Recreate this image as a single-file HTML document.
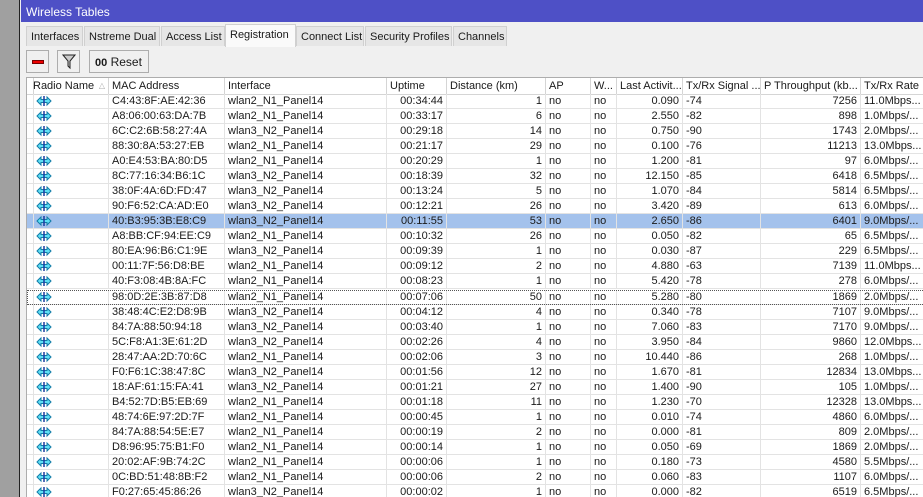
<!DOCTYPE html>
<html><head><meta charset="utf-8"><style>
*{margin:0;padding:0;box-sizing:border-box}
html,body{width:923px;height:497px;overflow:hidden}
body{background:#f0f0f0;font-family:"Liberation Sans",Arial,sans-serif;font-size:11px;color:#1a1a1a;position:relative}
#lstrip{position:absolute;left:0;top:0;width:20px;height:497px;background:#a0a0a0;border-right:1px solid #222}
#title{position:absolute;left:21px;top:0;right:0;height:22px;background:#4e50c6;color:#fff;font-size:12px;padding:5px 0 0 5px}
.tab{position:absolute;top:26px;height:20px;border:1px solid #d0d0d0;border-bottom:none;background:#e6e6e6;padding:4px 0 0 4px;font-size:11px;white-space:nowrap;overflow:hidden}
.tab.act{top:24px;height:23px;background:#fafafa;padding-top:4px}
.btn{position:absolute;top:50px;height:23px;border:1px solid #adadad;background:#f0f0f0}
#tbl{position:absolute;left:26px;top:77px;width:897px;height:420px;background:#fff;border-left:1px solid #adadad;border-top:1px solid #adadad;overflow:hidden}
.row{position:absolute;left:0;width:920px;height:15px;display:grid;grid-template-columns:3px 79px 116px 162px 60px 99px 45px 26px 66px 78px 100px 70px;border-bottom:1px solid #e3e3e3}
.row>span{border-right:1px solid #e3e3e3;white-space:nowrap;overflow:hidden;padding:0 3px;line-height:14px}
.row>span.r{text-align:right}
.hdr{top:0;height:17px;background:#fff;border-bottom:1px solid #d5d5d5}
.hdr>span{border-right:1px solid #d5d5d5;padding-top:1px}
.sel{background:#a4c2ec}
.foc{outline:1px dotted #555;outline-offset:-1px}
svg{display:block;margin:1px 0 0 3px}
</style></head><body>
<div id="lstrip"></div>
<div id="title">Wireless Tables</div>
<div class="tab" style="left:26px;width:57px">Interfaces</div>
<div class="tab" style="left:84px;width:76px">Nstreme Dual</div>
<div class="tab" style="left:161px;width:64px">Access List</div>
<div class="tab act" style="left:225px;width:71px">Registration</div>
<div class="tab" style="left:296px;width:68px">Connect List</div>
<div class="tab" style="left:365px;width:87px">Security Profiles</div>
<div class="tab" style="left:453px;width:54px">Channels</div>
<div class="btn" style="left:26px;width:23px"><div style="position:absolute;left:5px;top:9px;width:12px;height:4px;background:#e00;border:1px solid #700"></div></div>
<div class="btn" style="left:57px;width:23px"><svg width="14" height="16" viewBox="0 0 14 16" style="margin:3px 0 0 4px"><path d="M1 1h12L8 7v7L6 12V7z" fill="#ccc" stroke="#222"/></svg></div>
<div class="btn" style="left:89px;width:60px;padding:4px 0 0 5px;font-size:12px"><b style="font-size:11px">00</b> Reset</div>
<div id="tbl">
<div class="row hdr"><span></span><span>Radio Name <span style="color:#aaa;font-size:8px;float:right">△</span></span><span>MAC Address</span><span>Interface</span><span>Uptime</span><span>Distance (km)</span><span>AP</span><span>W...</span><span>Last Activit...</span><span>Tx/Rx Signal ...</span><span>P Throughput (kb...</span><span>Tx/Rx Rate</span></div>
<div id="rows"></div>
</div>
<script>
var d=[
["C4:43:8F:AE:42:36","wlan2_N1_Panel14","00:34:44","1","0.090","-74","7256","11.0Mbps..."],
["A8:06:00:63:DA:7B","wlan2_N1_Panel14","00:33:17","6","2.550","-82","898","1.0Mbps/..."],
["6C:C2:6B:58:27:4A","wlan3_N2_Panel14","00:29:18","14","0.750","-90","1743","2.0Mbps/..."],
["88:30:8A:53:27:EB","wlan2_N1_Panel14","00:21:17","29","0.100","-76","11213","13.0Mbps..."],
["A0:E4:53:BA:80:D5","wlan2_N1_Panel14","00:20:29","1","1.200","-81","97","6.0Mbps/..."],
["8C:77:16:34:B6:1C","wlan3_N2_Panel14","00:18:39","32","12.150","-85","6418","6.5Mbps/..."],
["38:0F:4A:6D:FD:47","wlan3_N2_Panel14","00:13:24","5","1.070","-84","5814","6.5Mbps/..."],
["90:F6:52:CA:AD:E0","wlan3_N2_Panel14","00:12:21","26","3.420","-89","613","6.0Mbps/..."],
["40:B3:95:3B:E8:C9","wlan3_N2_Panel14","00:11:55","53","2.650","-86","6401","9.0Mbps/..."],
["A8:BB:CF:94:EE:C9","wlan2_N1_Panel14","00:10:32","26","0.050","-82","65","6.5Mbps/..."],
["80:EA:96:B6:C1:9E","wlan3_N2_Panel14","00:09:39","1","0.030","-87","229","6.5Mbps/..."],
["00:11:7F:56:D8:BE","wlan2_N1_Panel14","00:09:12","2","4.880","-63","7139","11.0Mbps..."],
["40:F3:08:4B:8A:FC","wlan2_N1_Panel14","00:08:23","1","5.420","-78","278","6.0Mbps/..."],
["98:0D:2E:3B:87:D8","wlan2_N1_Panel14","00:07:06","50","5.280","-80","1869","2.0Mbps/..."],
["38:48:4C:E2:D8:9B","wlan3_N2_Panel14","00:04:12","4","0.340","-78","7107","9.0Mbps/..."],
["84:7A:88:50:94:18","wlan3_N2_Panel14","00:03:40","1","7.060","-83","7170","9.0Mbps/..."],
["5C:F8:A1:3E:61:2D","wlan3_N2_Panel14","00:02:26","4","3.950","-84","9860","12.0Mbps..."],
["28:47:AA:2D:70:6C","wlan2_N1_Panel14","00:02:06","3","10.440","-86","268","1.0Mbps/..."],
["F0:F6:1C:38:47:8C","wlan3_N2_Panel14","00:01:56","12","1.670","-81","12834","13.0Mbps..."],
["18:AF:61:15:FA:41","wlan3_N2_Panel14","00:01:21","27","1.400","-90","105","1.0Mbps/..."],
["B4:52:7D:B5:EB:69","wlan2_N1_Panel14","00:01:18","11","1.230","-70","12328","13.0Mbps..."],
["48:74:6E:97:2D:7F","wlan2_N1_Panel14","00:00:45","1","0.010","-74","4860","6.0Mbps/..."],
["84:7A:88:54:5E:E7","wlan2_N1_Panel14","00:00:19","2","0.000","-81","809","2.0Mbps/..."],
["D8:96:95:75:B1:F0","wlan2_N1_Panel14","00:00:14","1","0.050","-69","1869","2.0Mbps/..."],
["20:02:AF:9B:74:2C","wlan2_N1_Panel14","00:00:06","1","0.180","-73","4580","5.5Mbps/..."],
["0C:BD:51:48:8B:F2","wlan2_N1_Panel14","00:00:06","2","0.060","-83","1107","6.0Mbps/..."],
["F0:27:65:45:86:26","wlan3_N2_Panel14","00:00:02","1","0.000","-82","6519","6.5Mbps/..."]];
var ic='<svg width="16" height="12" viewBox="0 0 16 12"><path d="M1 6L5 2V4.5H11V2L15 6L11 10V7.5H5V10Z" fill="#5fe0f5" stroke="#127ca8" stroke-width="1"/><path d="M8 1V11" stroke="#1a3aa0" stroke-width="1.5"/></svg>';
var h='';
for(var i=0;i<d.length;i++){var r=d[i];
h+='<div class="row'+(i==8?' sel':'')+(i==13?' foc':'')+'" style="top:'+(16+i*15.04).toFixed(2)+'px"><span></span><span>'+ic+'</span><span>'+r[0]+'</span><span>'+r[1]+'</span><span class="r">'+r[2]+'</span><span class="r">'+r[3]+'</span><span>no</span><span>no</span><span class="r">'+r[4]+'</span><span>'+r[5]+'</span><span class="r">'+r[6]+'</span><span>'+r[7]+'</span></div>';}
document.getElementById('rows').innerHTML=h;
</script>
</body></html>
